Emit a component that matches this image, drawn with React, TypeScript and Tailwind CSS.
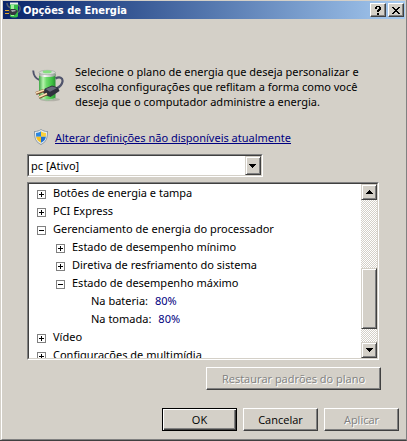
import { useState } from "react"
import type { ReactNode } from "react"

interface TreeNode {
  id: string
  label: string
  value?: string
  children?: TreeNode[]
}

const settings: TreeNode[] = [
  { id: "buttons", label: "Botões de energia e tampa", children: [] },
  { id: "pci", label: "PCI Express", children: [] },
  {
    id: "cpu",
    label: "Gerenciamento de energia do processador",
    children: [
      { id: "cpu-min", label: "Estado de desempenho mínimo", children: [] },
      { id: "cpu-cooling", label: "Diretiva de resfriamento do sistema", children: [] },
      {
        id: "cpu-max",
        label: "Estado de desempenho máximo",
        children: [
          { id: "cpu-max-dc", label: "Na bateria:", value: "80%" },
          { id: "cpu-max-ac", label: "Na tomada:", value: "80%" },
        ],
      },
    ],
  },
  { id: "video", label: "Vídeo", children: [] },
  { id: "media", label: "Configurações de multimídia", children: [] },
]

const raised =
  "border border-t-white border-l-white border-r-[#404040] border-b-[#404040] bg-[#d4d0c8] shadow-[inset_-1px_-1px_0_#808080]"
const raisedSoft =
  "border border-t-[#d4d0c8] border-l-[#d4d0c8] border-r-[#404040] border-b-[#404040] bg-[#d4d0c8] shadow-[inset_1px_1px_0_#fff,inset_-1px_-1px_0_#808080]"
const sunken = "border border-t-[#808080] border-l-[#808080] border-r-white border-b-white"
const sunkenInner = "border border-t-[#404040] border-l-[#404040] border-r-[#d4d0c8] border-b-[#d4d0c8]"

function BatteryIcon({ className }: { className?: string }) {
  return (
    <svg viewBox="0 0 32 33" className={className} aria-hidden="true">
      <defs>
        <linearGradient id="cell" x1="0" x2="1">
          <stop offset="0" stopColor="#3da643" />
          <stop offset=".25" stopColor="#b9f3b0" />
          <stop offset=".45" stopColor="#6fdc6c" />
          <stop offset=".8" stopColor="#3cc040" />
          <stop offset="1" stopColor="#2a8f34" />
        </linearGradient>
        <linearGradient id="cap" x1="0" x2="1">
          <stop offset="0" stopColor="#98a09a" />
          <stop offset=".35" stopColor="#fbfdfb" />
          <stop offset="1" stopColor="#8d968f" />
        </linearGradient>
      </defs>
      <ellipse cx="18" cy="30.500" rx="10" ry="1.800" fill="#b3b0a8" />
      <path d="M1.200 1.500c.3 5 1.500 8 6.500 9.500" fill="none" stroke="#50546c" strokeWidth="1.900" />
      <path d="M7 5v24c1 3 15.500 3 16.500 0V5z" fill="url(#cell)" />
      <path d="M7 3.500v3c2 2 14.500 2 16.500 0v-3z" fill="url(#cap)" />
      <ellipse cx="15.200" cy="3.500" rx="8.200" ry="2.200" fill="#d3ddd3" stroke="#98a39a" strokeWidth=".6" />
      <ellipse cx="15.200" cy="2.800" rx="4.500" ry="1.500" fill="#86df80" />
      <path d="M7 28.500c2 2.300 14.500 2.300 16.500 0v1c-2 2.500-14.500 2.500-16.500 0z" fill="#a5c4a5" />
      <path d="M23.500 9.500c4-2.500 7.500-.8 7 3-.5 3.500-3 5.500-6 7" fill="none" stroke="#50546c" strokeWidth="2.200" />
      <path d="M13 19.500l7-3 6 2 1.500 3.500-9 6L12.500 26l-1.500-3z" fill="#30323e" />
      <path d="M13.500 20l6.500-2.500 5 1.500-7 3.800z" fill="#686b7c" />
      <path d="M4 24.500l8-3M7 28.500l8-3.500" stroke="#7b4e2c" strokeWidth="3" />
      <path d="M4 24l8-3M7 28l8-3.500" stroke="#f9dfb4" strokeWidth="1.700" />
    </svg>
  )
}

function PlugIcon() {
  return (
    <svg viewBox="0 0 16 16" className="size-4 shrink-0" aria-hidden="true">
      <path d="M2 1c0 3 1 4 4 5M13 3c3 1 3 6-1 8" fill="none" stroke="#56606e" strokeWidth="1.500" />
      <path d="M5 2v12c0 2 8 2 8 0V2z" fill="#35bd48" />
      <path d="M6 3v11h3V3z" fill="#a2f09c" />
      <path d="M5 .5h8v2H5z" fill="#e9efea" />
      <path d="M4 8l2-1h4l3 2-3 4H6l-2-2z" fill="#363841" />
      <path d="M6 8h4l1 1-4 1z" fill="#a5a7ae" />
      <path d="M0 8.500h4M0 11.500h4" stroke="#e3a92c" strokeWidth="1.200" />
    </svg>
  )
}

function ShieldIcon() {
  return (
    <svg viewBox="0 0 14 16" className="h-4 w-3.5 shrink-0" aria-hidden="true">
      <path d="M7 0c2 1.500 4 2 7 2 0 7-1 11-7 14C1 13 0 9 0 2c3 0 5-.5 7-2z" fill="#8c9aa5" />
      <path d="M7 1c2 1.300 4 1.800 6 1.900C13 9 12 12.500 7 15 2 12.500 1 9 1 2.900 3 2.800 5 2.300 7 1z" fill="#e6edf2" />
      <path d="M7 2.300v5.500H2.100L2 4c2-.2 3.500-.7 5-1.700z" fill="#2b86e0" />
      <path d="M7 2.300C8.500 3.300 10 3.800 12 4l-.1 3.800H7z" fill="#fbd13a" />
      <path d="M2.100 7.800H7v6C4 12.300 2.500 10.500 2.100 7.800z" fill="#f8c21f" />
      <path d="M11.900 7.800H7v6c3-1.500 4.500-3.300 4.900-6z" fill="#1f6fd0" />
    </svg>
  )
}

function Arrow({ up = false }: { up?: boolean }) {
  return (
    <svg viewBox="0 0 7 4" className="h-1 w-[7px]" shapeRendering="crispEdges" aria-hidden="true">
      {up ? (
        <path d="M3 0h1v1h1v1h1v1h1v1H0V3h1V2h1V1h1z" />
      ) : (
        <path d="M0 0h7v1H6v1H5v1H4v1H3V3H2V2H1V1H0z" />
      )}
    </svg>
  )
}

function TitleButton({ label, children }: { label: string; children: ReactNode }) {
  return (
    <button aria-label={label} className={`flex h-3.5 w-4 items-center justify-center ${raised}`}>
      {children}
    </button>
  )
}

function DialogButton({ label, disabled }: { label: string; disabled?: boolean }) {
  return (
    <button
      disabled={disabled}
      className={`h-[23px] w-[75px] ${raised} disabled:text-[#808080] disabled:[text-shadow:1px_1px_0_#fff]`}
    >
      {label}
    </button>
  )
}

interface TreeProps {
  nodes: TreeNode[]
  open: string[]
  onToggle: (id: string) => void
}

function Tree({ nodes, open, onToggle }: TreeProps) {
  return (
    <ul>
      {nodes.map((node) => {
        const isOpen = open.includes(node.id)
        return (
          <li key={node.id}>
            <div className="flex h-[18px] items-center gap-[7px] whitespace-nowrap">
              {node.children ? (
                <button
                  aria-label={node.label}
                  aria-expanded={isOpen}
                  onClick={() => onToggle(node.id)}
                  className="mt-1 size-[9px] shrink-0 bg-white"
                >
                  <svg viewBox="0 0 9 9" className="size-[9px]" shapeRendering="crispEdges">
                    <path d="M0 0h9v9H0zM1 1v7h7V1z" fill="#808080" fillRule="evenodd" />
                    <path d={isOpen ? "M2 4h5v1H2z" : "M2 4h5v1H2zM4 2h1v5H4z"} />
                  </svg>
                </button>
              ) : (
                <span className="w-[9px]" />
              )}
              <span>{node.label}</span>
              {node.value && <span className="text-[#000080]">{node.value}</span>}
            </div>
            {node.children && isOpen && (
              <div className="pl-[19px]">
                <Tree nodes={node.children} open={open} onToggle={onToggle} />
              </div>
            )}
          </li>
        )
      })}
    </ul>
  )
}

function ScrollBar() {
  return (
    <div className="flex w-4 shrink-0 flex-col bg-[repeating-conic-gradient(#fff_0_25%,#d4d0c8_0_50%)] bg-[length:2px_2px]">
      <button aria-label="Rolar para cima" className={`flex h-4 items-center justify-center ${raisedSoft}`}>
        <Arrow up />
      </button>
      <div className="flex flex-1 flex-col">
        <div className="grow-[69] basis-0" />
        <div className={`grow-[61] basis-0 ${raisedSoft}`} />
        <div className="grow-[13] basis-0" />
      </div>
      <button aria-label="Rolar para baixo" className={`flex h-4 items-center justify-center ${raisedSoft}`}>
        <Arrow />
      </button>
    </div>
  )
}

export default function App() {
  const [open, setOpen] = useState(["cpu", "cpu-max"])

  const toggle = (id: string) => {
    setOpen(open.includes(id) ? open.filter((item) => item !== id) : [...open, id])
  }

  return (
    <div className="flex min-h-screen flex-col border-r border-b border-r-[#808080] border-b-[#404040] bg-[#d4d0c8] font-['Open_Sans','Noto_Sans',sans-serif] text-[11px] leading-[15px] text-black">
      <div className="ml-px flex flex-1 flex-col border-b border-l border-b-[#808080] border-l-white pt-px pr-px pl-px">
        <header className="flex h-[18px] items-center gap-0.5 bg-linear-to-r from-[#0a246a] to-[#a6caf0] pr-px pl-0.5">
          <PlugIcon />
          <h1 className="flex-1 font-['DejaVu_Sans_Condensed','DejaVu_Sans',sans-serif] text-[11px] font-bold text-white">
            Opções de Energia
          </h1>
          <TitleButton label="Ajuda">
            <svg viewBox="0 0 6 9" className="h-[9px] w-1.5" shapeRendering="crispEdges">
              <path d="M1 0h4v1h1v3H5v1H4v1H2V4h1V3h1V1H2v2H0V1h1zM2 7h2v2H2z" />
            </svg>
          </TitleButton>
          <TitleButton label="Fechar">
            <svg viewBox="0 0 8 7" className="h-[7px] w-2" shapeRendering="crispEdges">
              <path d="M0 0h2v1h1v1h2V1h1V0h2v1H7v1H6v1H5v1h1v1h1v1h1v1H6V6H5V5H3v1H2v1H0V6h1V5h1V4h1V3H2V2H1V1H0z" />
            </svg>
          </TitleButton>
        </header>

        <main className="flex flex-col pr-[26px] pl-6 font-['Noto_Sans','Open_Sans',sans-serif]">
          <section className="mt-[45px] flex gap-[11px] pl-[5px]">
            <BatteryIcon className="mt-[5px] h-[33px] w-8 shrink-0" />
            <p className="max-w-[300px]">
              Selecione o plano de energia que deseja personalizar e escolha configurações que reflitam a forma como você
              deseja que o computador administre a energia.
            </p>
          </section>

          <div className="mt-5 flex items-center gap-[7px] pl-[7px]">
            <ShieldIcon />
            <a href="#alterar" className="text-[#000080] underline">
              Alterar definições não disponíveis atualmente
            </a>
          </div>

          <div className={`relative mt-[9px] w-[67%] ${sunken}`}>
            <div className={`bg-white ${sunkenInner}`}>
              <select aria-label="Plano de energia" className="block h-[19px] w-full appearance-none px-0.5">
                <option>pc [Ativo]</option>
              </select>
            </div>
            <span
              className={`pointer-events-none absolute inset-y-px right-px flex w-4 items-center justify-center ${raisedSoft}`}
            >
              <Arrow />
            </span>
          </div>

          <div className={`mt-[5px] ${sunken}`}>
            <div className={`flex h-44 bg-white ${sunkenInner}`}>
              <div className="flex-1 overflow-hidden pl-2">
                <div className="-mt-px">
                  <Tree nodes={settings} open={open} onToggle={toggle} />
                </div>
              </div>
              <ScrollBar />
            </div>
          </div>

          <button
            disabled
            className={`mt-[7px] -mr-0.5 h-[23px] w-[175px] self-end font-['Open_Sans','Noto_Sans',sans-serif] ${raised} text-[#808080] [text-shadow:1px_1px_0_#fff]`}
          >
            Restaurar padrões do plano
          </button>
        </main>

        <footer className="mt-auto flex justify-end gap-1.5 pr-1.5 pb-2">
          <button className="h-[23px] w-[75px] border border-black bg-[#d4d0c8] shadow-[inset_1px_1px_0_#fff,inset_-1px_-1px_0_#404040,inset_-2px_-2px_0_#808080]">
            OK
          </button>
          <DialogButton label="Cancelar" />
          <DialogButton label="Aplicar" disabled />
        </footer>
      </div>
    </div>
  )
}
